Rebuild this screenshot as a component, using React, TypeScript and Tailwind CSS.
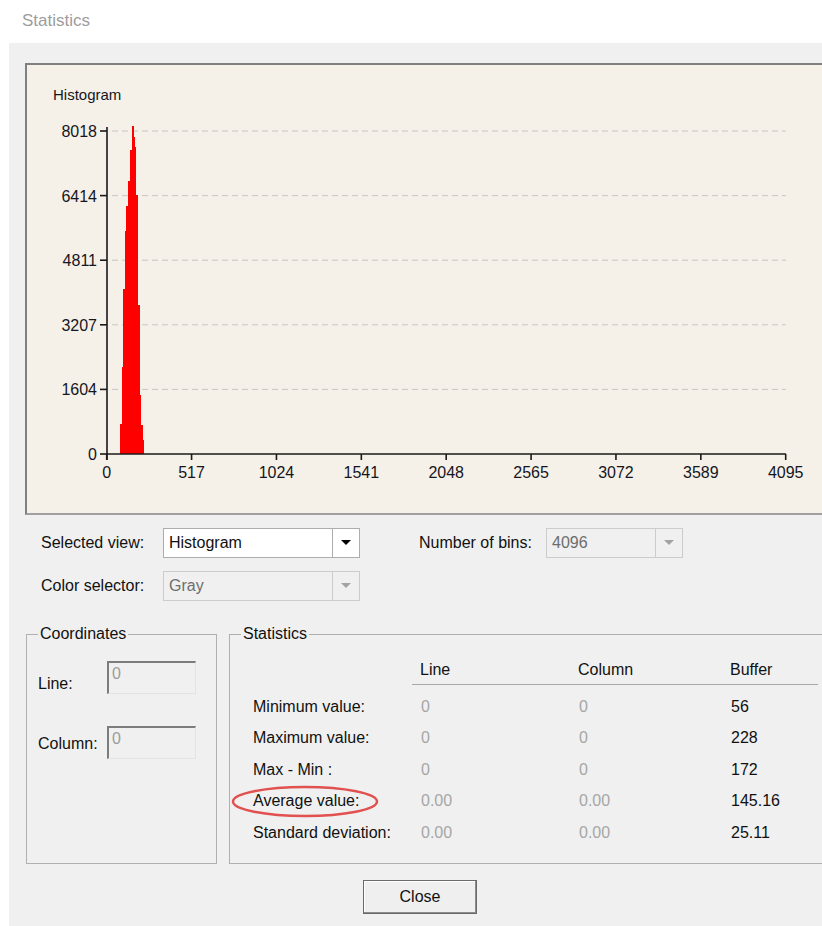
import React from 'react';

const yTicks = [
  { label: '8018', y: 131 },
  { label: '6414', y: 195.6 },
  { label: '4811', y: 260.2 },
  { label: '3207', y: 324.8 },
  { label: '1604', y: 389.4 },
  { label: '0', y: 454 },
];

const xTicks = ['0', '517', '1024', '1541', '2048', '2565', '3072', '3589', '4095'];

// step outline of the histogram bars, in panel coordinates
const bars = [
  [120, 454], [120, 424], [122, 424], [122, 367], [123, 367], [123, 289],
  [125, 289], [125, 231], [126, 231], [126, 206], [128, 206], [128, 181],
  [130, 181], [130, 150], [132, 150], [132, 126], [134, 126], [134, 137],
  [135, 137], [135, 147], [136, 147], [136, 195], [138, 195], [138, 305],
  [140, 305], [140, 395], [141, 395], [141, 425], [143, 425], [143, 440],
  [144, 440], [144, 454],
];

const HistogramChart: React.FC = () => (
  <svg width="798" height="448" viewBox="27 65 798 448" className="block">
    <text x="53" y="100" fontSize="15" fill="#16161e" fontFamily="'Liberation Sans', Arial, sans-serif">
      Histogram
    </text>
    {yTicks.slice(0, 5).map((t) => (
      <line key={t.label} x1="112" y1={t.y} x2="786" y2={t.y} stroke="#c6c6c6" strokeWidth="1" strokeDasharray="6 4" />
    ))}
    <polygon points={bars.map((p) => p.join(',')).join(' ')} fill="#ff0000" shapeRendering="crispEdges" />
    <line x1="107" y1="127" x2="107" y2="460" stroke="#1a1a1a" strokeWidth="1.6" />
    <line x1="107" y1="454" x2="786" y2="454" stroke="#1a1a1a" strokeWidth="1.6" />
    {yTicks.map((t) => (
      <g key={t.label}>
        <line x1="100" y1={t.y} x2="107" y2={t.y} stroke="#1a1a1a" strokeWidth="1.6" />
        <text x="97" y={t.y + 6} fontSize="16" textAnchor="end" fill="#16161e" fontFamily="'Liberation Sans', Arial, sans-serif">
          {t.label}
        </text>
      </g>
    ))}
    {xTicks.map((label, i) => {
      const x = 106.7 + i * 84.875;
      return (
        <g key={label}>
          <line x1={x} y1="454" x2={x} y2="460" stroke="#1a1a1a" strokeWidth="1.6" />
          <text x={x} y="478" fontSize="16" textAnchor="middle" fill="#16161e" fontFamily="'Liberation Sans', Arial, sans-serif">
            {label}
          </text>
        </g>
      );
    })}
  </svg>
);

const ComboBox: React.FC<{ value: string; width: string; disabled?: boolean }> = ({ value, width, disabled }) => (
  <div
    className={`flex h-[30px] ${width} border ${
      disabled ? 'border-[#cccccc] bg-[#f0f0f0] text-[#6d6d6d]' : 'border-[#adadad] bg-white text-[#111111]'
    }`}
  >
    <div className="flex flex-1 items-center pl-[5px]">{value}</div>
    <div className={`flex w-[27px] items-center justify-center border-l ${disabled ? 'border-[#cccccc]' : 'border-[#adadad]'}`}>
      <svg width="10" height="6" viewBox="0 0 10 6">
        <polygon points="0,0 10,0 5,5" fill={disabled ? '#a3a3a3' : '#000000'} />
      </svg>
    </div>
  </div>
);

const SunkenField: React.FC = () => (
  <div className="h-[33px] w-[89px] border-t-2 border-l-2 border-t-[#7c7c7c] border-l-[#7c7c7c] border-r border-b border-r-[#e3e3e3] border-b-[#e3e3e3] bg-[#f0f0f0] pl-[3px] leading-[22px] text-[#9c9c9c]">
    0
  </div>
);

const statRows = [
  { label: 'Minimum value:', line: '0', column: '0', buffer: '56' },
  { label: 'Maximum value:', line: '0', column: '0', buffer: '228' },
  { label: 'Max - Min :', line: '0', column: '0', buffer: '172' },
  { label: 'Average value:', line: '0.00', column: '0.00', buffer: '145.16' },
  { label: 'Standard deviation:', line: '0.00', column: '0.00', buffer: '25.11' },
];

const App: React.FC = () => {
  return (
    <div className="h-[926px] w-[822px] overflow-hidden bg-white font-['Liberation_Sans',Arial,sans-serif] text-[16px] text-[#111111]">
      {/* window caption */}
      <div className="flex h-[43px] items-center pl-[22px] pb-[1px] text-[17px] text-[#9d9d9d]">Statistics</div>

      <div className="ml-[9px] h-[883px] bg-[#f0f0f0] pt-[20px]">
        {/* chart panel */}
        <div className="ml-[16px] h-[452px] w-[800px] border-t-2 border-l-2 border-b-2 border-t-[#808080] border-l-[#808080] border-b-[#a0a0a0] bg-[#f5f1e8]">
          <HistogramChart />
        </div>

        {/* view selectors */}
        <div className="mt-[13px] flex items-center pl-[32px]">
          <span className="w-[122px]">Selected view:</span>
          <ComboBox value="Histogram" width="w-[197px]" />
          <span className="ml-[59px] w-[127px]">Number of bins:</span>
          <ComboBox value="4096" width="w-[137px]" disabled />
        </div>
        <div className="mt-[13px] flex items-center pl-[32px]">
          <span className="w-[122px]">Color selector:</span>
          <ComboBox value="Gray" width="w-[197px]" disabled />
        </div>

        {/* group boxes */}
        <div className="mt-[33px] flex gap-[12px] pl-[17px]">
          <div className="relative h-[230px] w-[191px] shrink-0 border border-[#b0b0b0]">
            <span className="absolute -top-[11px] left-[11px] bg-[#f0f0f0] px-[2px] leading-[20px]">Coordinates</span>
            <div className="mt-[26px] flex items-start pl-[11px]">
              <span className="w-[69px] pt-[11px]">Line:</span>
              <SunkenField />
            </div>
            <div className="mt-[30px] flex items-center pl-[11px]">
              <span className="w-[69px] pt-[2px]">Column:</span>
              <SunkenField />
            </div>
          </div>

          <div className="relative h-[230px] w-[620px] shrink-0 border border-[#b0b0b0]">
            <span className="absolute -top-[11px] left-[11px] bg-[#f0f0f0] px-[2px] leading-[20px]">Statistics</span>
            <div className="ml-[182px] mt-[21px] flex h-[29px] w-[406px] items-center border-b border-[#a8a8a8] pl-[8px]">
              <span className="w-[158px]">Line</span>
              <span className="w-[152px]">Column</span>
              <span>Buffer</span>
            </div>
            <div className="mt-[6px]">
              {statRows.map((r) => (
                <div key={r.label} className="flex h-[31.5px] items-center pl-[23px]">
                  <span className="w-[168px]">{r.label}</span>
                  <span className="w-[158px] text-[#a6a6a6]">{r.line}</span>
                  <span className="w-[152px] text-[#a6a6a6]">{r.column}</span>
                  <span>{r.buffer}</span>
                </div>
              ))}
            </div>
            {/* red highlight around the average row */}
            <svg className="absolute left-[1px] top-[150px]" width="150" height="33" viewBox="0 0 150 33">
              <ellipse cx="74" cy="16.5" rx="72" ry="14.5" fill="none" stroke="#e0514f" strokeWidth="2.5" />
            </svg>
          </div>
        </div>

        {/* footer button */}
        <div className="mt-[16px] pl-[354px]">
          <button className="h-[34px] w-[114px] border border-[#6a6a6a] bg-[#efefef] shadow-[inset_-1px_-1px_0_#8c8c8c,inset_1px_1px_0_#ffffff] text-[16px] text-[#111111]">
            Close
          </button>
        </div>
      </div>
    </div>
  );
};

export default App;
